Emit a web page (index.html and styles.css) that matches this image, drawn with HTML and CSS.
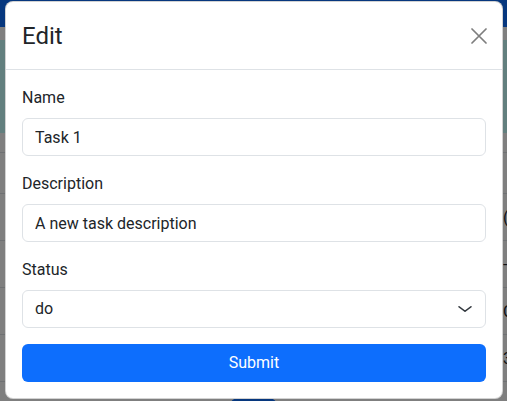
FILE: index.html
```html
<!DOCTYPE html>
<html lang="en">
<head>
<meta charset="utf-8">
<title>Edit</title>
<link rel="stylesheet" href="styles.css">
</head>
<body>
<div class="page">
  <nav class="navbar"></nav>
  <div class="hero"></div>
  <div class="table">
    <div class="row"><span class="cell-spacer"></span><span class="cell"></span></div>
    <div class="row"><span class="cell-spacer"></span><span class="cell">(</span></div>
    <div class="row"><span class="cell-spacer"></span><span class="cell">-</span></div>
    <div class="row"><span class="cell-spacer"></span><span class="cell">C</span></div>
    <div class="row"><span class="cell-spacer"></span><span class="cell">3</span></div>
  </div>
  <div class="page-actions"><span class="page-btn"></span></div>
</div>
<div class="backdrop"></div>
<div class="modal">
  <div class="modal-header">
    <h4 class="modal-title">Edit</h4>
    <button class="btn-close" type="button" aria-label="Close">
      <svg viewBox="0 0 16 16" width="16" height="16"><path d="M1 1 15 15M15 1 1 15" fill="none" stroke="#000" stroke-width="1.7" stroke-linecap="round"/></svg>
    </button>
  </div>
  <form class="modal-body">
    <div class="field">
      <label class="form-label">Name</label>
      <input class="form-control" type="text" value="Task 1">
    </div>
    <div class="field">
      <label class="form-label">Description</label>
      <input class="form-control" type="text" value="A new task description">
    </div>
    <div class="field">
      <label class="form-label">Status</label>
      <div class="select-wrap">
        <select class="form-select"><option>do</option></select>
        <svg class="chevron" viewBox="0 0 16 16" width="16" height="12" preserveAspectRatio="none"><path d="m2 5 6 6 6-6" fill="none" stroke="#343a40" stroke-linecap="round" stroke-linejoin="round" stroke-width="1.6"/></svg>
      </div>
    </div>
    <button class="btn-primary" type="button">Submit</button>
  </form>
</div>
</body>
</html>
```

FILE: styles.css
```css
* { box-sizing: border-box; }
html, body { margin: 0; padding: 0; }
html { overflow: hidden; }
body {
  width: 507px;
  height: 401px;
  overflow: hidden;
  font-family: Roboto, "Noto Sans", sans-serif;
  color: #212529;
  background: #fff;
  position: relative;
}
.page { display: flex; flex-direction: column; height: 401px; overflow: hidden; }
.navbar { height: 27px; background: #0d6efd; flex: none; }
.hero { height: 93px; margin-top: 13px; background: #c4fffc; flex: none; }
.table { margin-top: 19px; flex: none; }
.row {
  display: flex;
  align-items: center;
  border-top: 1px solid #dee2e6;
  height: 47px;
  font-size: 16px;
  color: #212529;
}
.row:first-child { height: 41px; }
.cell-spacer { width: 503px; flex: none; }
.cell { flex: none; }
.page-actions { display: flex; padding-left: 230px; border-top: 1px solid #dee2e6; flex: none; height: 20px; }
.page-btn { display: block; width: 47px; height: 20px; background: #0d6efd; border-radius: 8px; margin-top: 16px; }

.backdrop {
  position: absolute;
  inset: 0;
  background: rgba(0, 0, 0, 0.5);
}
.modal {
  position: absolute;
  left: 5px;
  top: 1px;
  width: 498px;
  background: #fff;
  border: 1px solid rgba(0, 0, 0, 0.175);
  border-radius: 8px;
}
.modal-header {
  display: flex;
  align-items: center;
  justify-content: space-between;
  padding: 16px 16px;
  border-bottom: 1px solid #dee2e6;
}
.modal-title {
  margin: 0;
  font-size: 24px;
  font-weight: 400;
  line-height: 34px;
  padding-top: 1px;
}
.btn-close {
  border: 0;
  background: transparent;
  padding: 0;
  width: 16px;
  height: 16px;
  margin-right: -1px;
  opacity: 0.5;
  display: flex;
}
.modal-body { padding: 16px; display: flex; flex-direction: column; }
.field { display: flex; flex-direction: column; margin-bottom: 16px; }
.form-label { font-size: 16px; line-height: 24px; margin-bottom: 8px; }
.form-control, .form-select {
  display: block;
  width: 100%;
  height: 38px;
  padding: 6px 12px;
  font-family: inherit;
  font-size: 16px;
  line-height: 24px;
  color: #212529;
  background: #fff;
  border: 1px solid #dee2e6;
  border-radius: 6px;
  outline: none;
  appearance: none;
  -webkit-appearance: none;
}
.select-wrap { position: relative; }
.chevron { position: absolute; right: 13px; top: 13px; pointer-events: none; }
.btn-primary {
  width: 100%;
  height: 38px;
  border: 0;
  border-radius: 6px;
  background: #0d6efd;
  color: #fff;
  font-family: inherit;
  font-size: 16px;
  line-height: 24px;
}
```
